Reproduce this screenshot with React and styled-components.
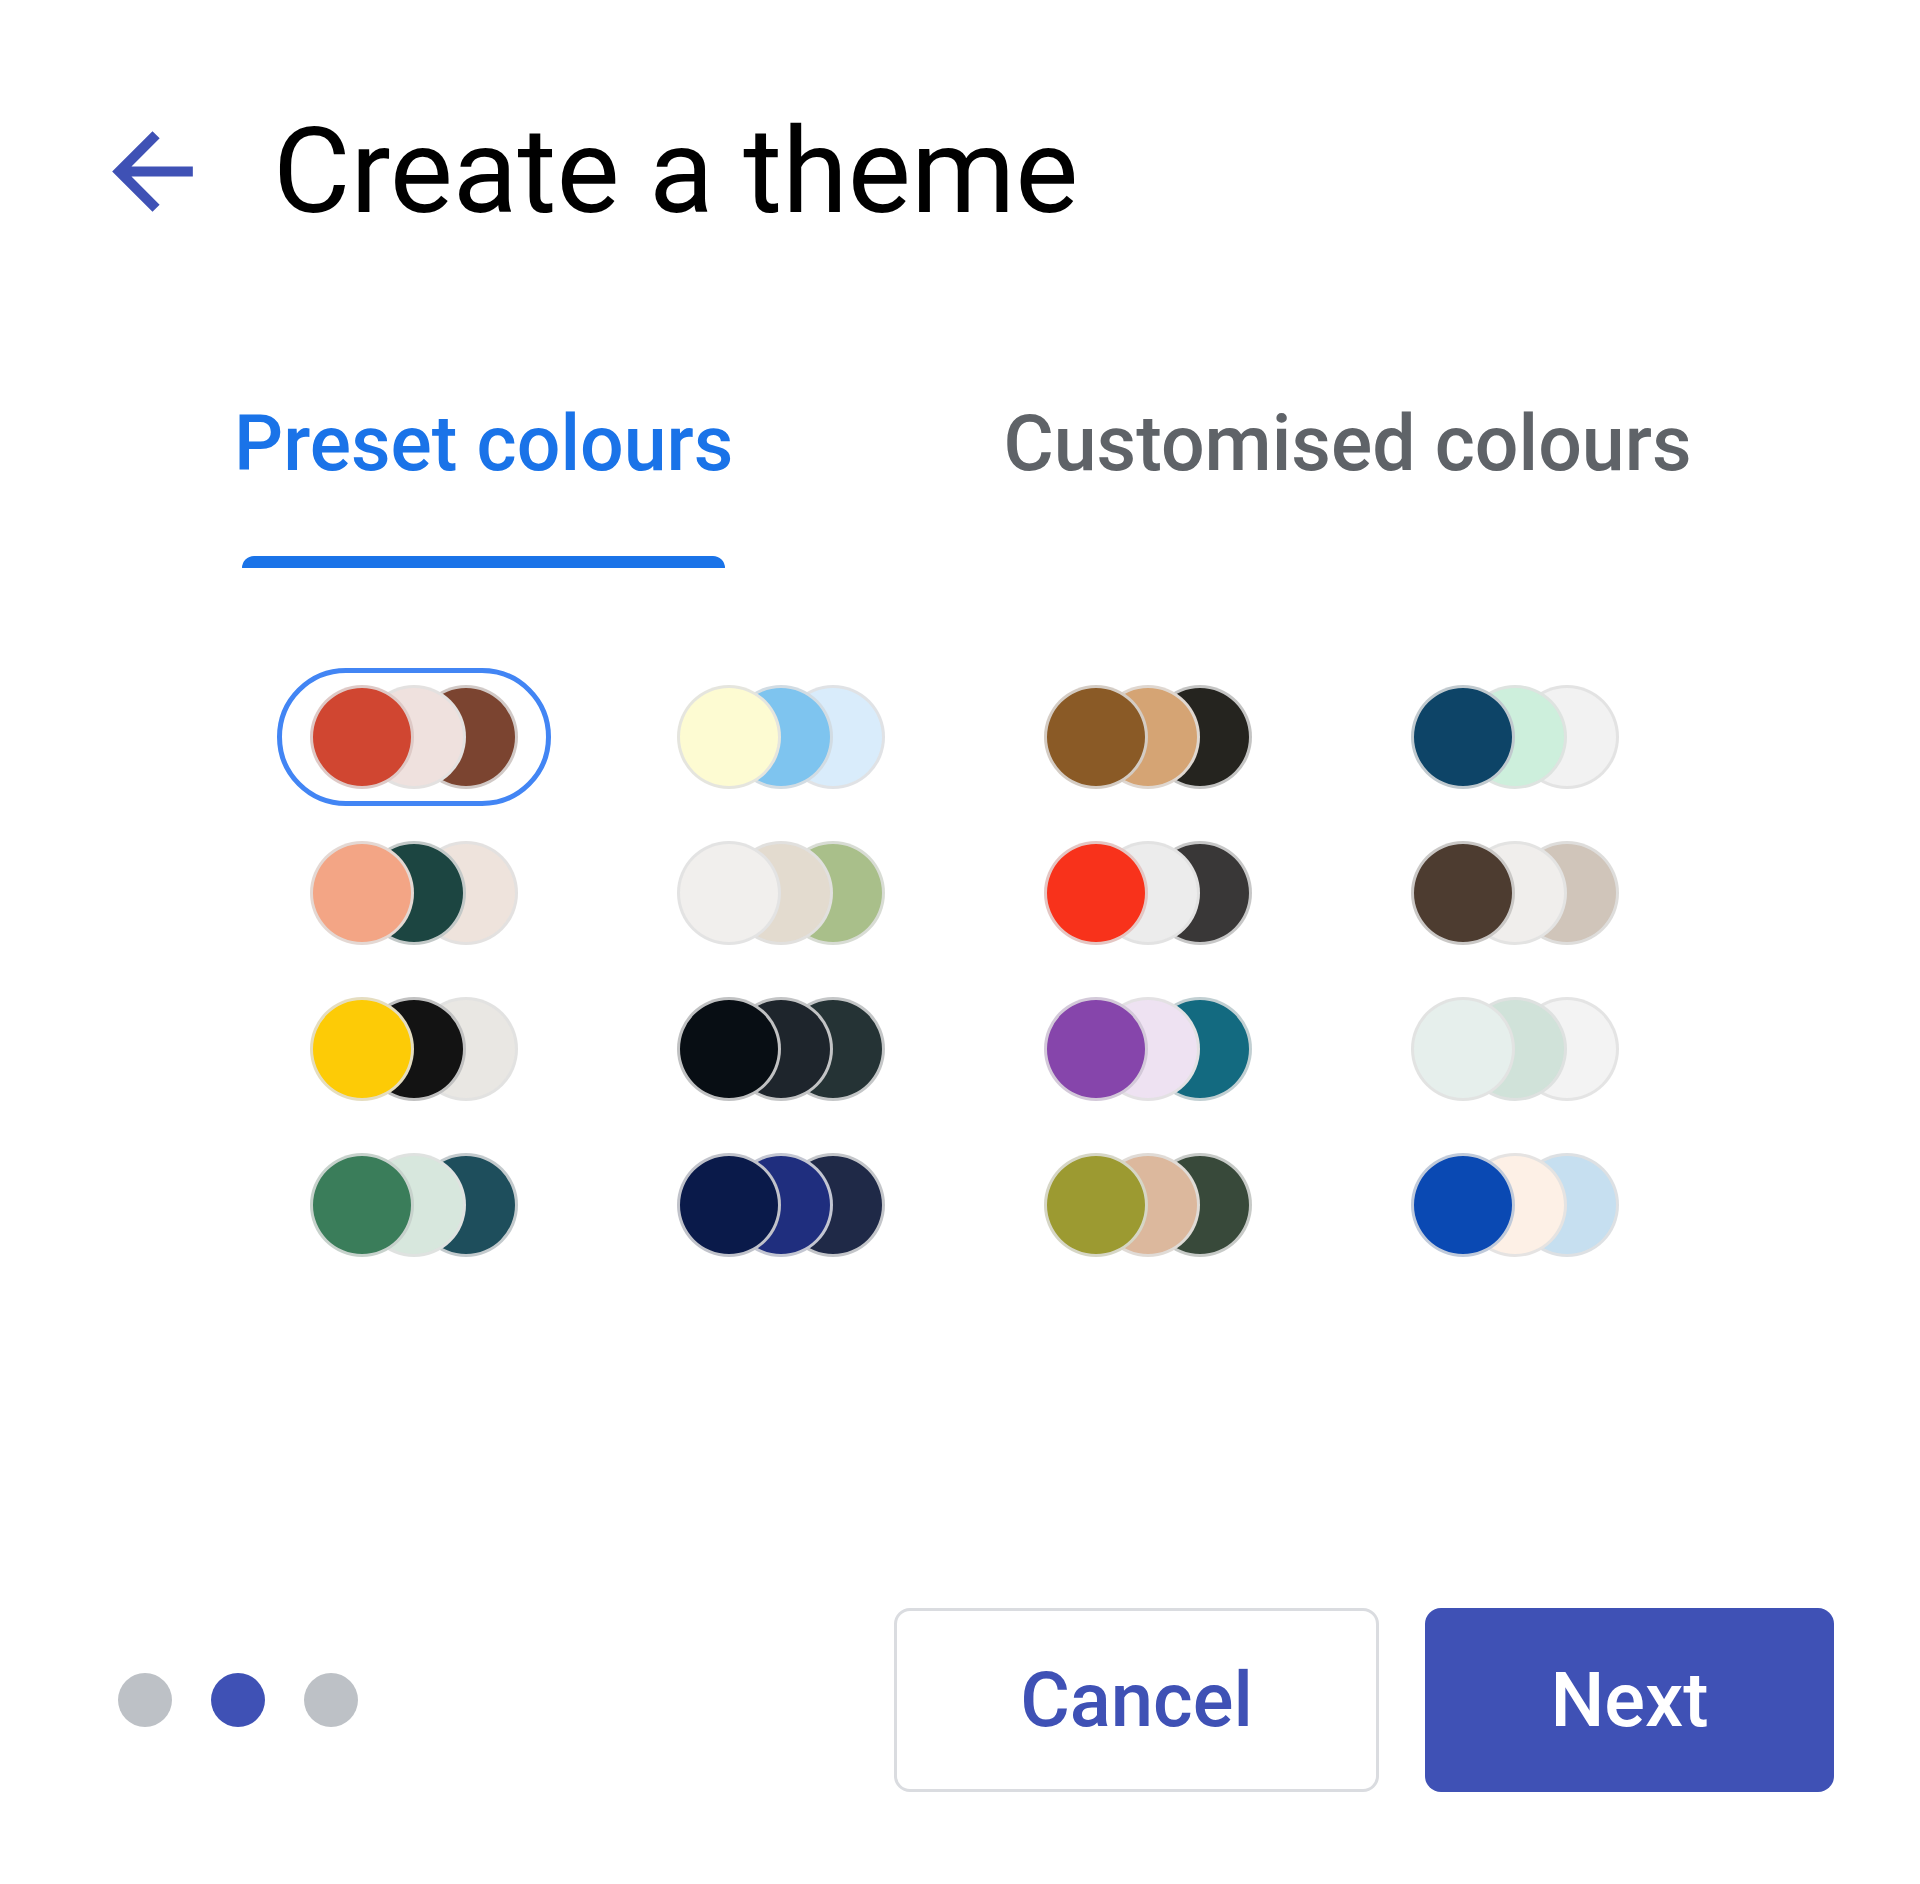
import React, { useState } from "react";
import styled, { createGlobalStyle } from "styled-components";

const GlobalStyle = createGlobalStyle`
	html, body {
		margin: 0;
		padding: 0;
		background: #ffffff;
	}
	body {
		font-family: Roboto, "Liberation Sans", Arial, sans-serif;
		color: #000000;
	}
	* {
		box-sizing: border-box;
	}
`;

const presets = [
	["#d04631", "#efe1de", "#7b4430"],
	["#fdfbd2", "#7ec4ef", "#d9ecfb"],
	["#8a5a26", "#d5a474", "#25241f"],
	["#0d4467", "#cdefdc", "#f2f2f2"],
	["#f3a585", "#1c4541", "#eee3dc"],
	["#f1efed", "#e3dbcf", "#a9bf8a"],
	["#f8321b", "#ececec", "#393737"],
	["#4d3c30", "#f0eeec", "#d0c5ba"],
	["#fdcb06", "#131313", "#e9e7e3"],
	["#080e14", "#1e252c", "#253335"],
	["#8645ab", "#eee2f2", "#136a80"],
	["#e6efec", "#d0e2d9", "#f3f3f3"],
	["#3a7d5a", "#d7e7dd", "#1e4e5c"],
	["#0a1a4a", "#1f2e7e", "#1f2947"],
	["#9c9a31", "#dcb89d", "#38493a"],
	["#0a49b3", "#fdf0e6", "#c6dff0"],
];

const App = () => {
	const [selected, setSelected] = useState(0);
	const [tab, setTab] = useState(0);

	return (
		<>
			<GlobalStyle />
			<Page>
				<Header>
					<BackButton aria-label='Back'>
						<svg viewBox='0 0 24 24' width='121' height='121'>
							<path
								fill='#3f51b5'
								d='M20 11H7.83l5.59-5.59L12 4l-8 8 8 8 1.41-1.41L7.83 13H20v-2z'
							/>
						</svg>
					</BackButton>
					<Title>Create a theme</Title>
				</Header>

				<Tabs>
					<Tab active={tab === 0} onClick={() => setTab(0)}>
						Preset colours
					</Tab>
					<Tab active={tab === 1} onClick={() => setTab(1)}>
						Customised colours
					</Tab>
				</Tabs>

				<SwatchGrid>
					{presets.map((colors, index) => (
						<Swatch
							key={index}
							selected={selected === index}
							onClick={() => setSelected(index)}
						>
							{colors.map((c, i) => (
								<Circle key={i} color={c} layer={3 - i} />
							))}
						</Swatch>
					))}
				</SwatchGrid>

				<Footer>
					<Dots>
						<Dot />
						<Dot active />
						<Dot />
					</Dots>
					<Actions>
						<Button>Cancel</Button>
						<Button primary>Next</Button>
					</Actions>
				</Footer>
			</Page>
		</>
	);
};

const Page = styled.main`
	width: 1920px;
	min-height: 1884px;
	padding-top: 111px;
	display: flex;
	flex-direction: column;
`;

const Header = styled.header`
	display: flex;
	align-items: center;
	padding-left: 92px;
	height: 121px;
`;

const BackButton = styled.button`
	display: flex;
	border: none;
	background: none;
	padding: 0;
	margin-right: 60px;
	cursor: pointer;
`;

const Title = styled.h1`
	margin: 0;
	font-size: 119px;
	line-height: 121px;
	font-weight: 400;
	color: #000000;
`;

const Tabs = styled.nav`
	display: flex;
	gap: 270px;
	margin-top: 173px;
	padding-left: 234px;
`;

const Tab = styled.div`
	position: relative;
	font-size: 77px;
	line-height: 78px;
	font-weight: 500;
	padding-bottom: 85px;
	color: ${(props) => (props.active ? "#1a73e8" : "#5f6368")};
	cursor: pointer;

	&::after {
		content: "";
		display: ${(props) => (props.active ? "block" : "none")};
		position: absolute;
		left: 8px;
		right: 8px;
		bottom: 0;
		height: 12px;
		border-radius: 12px 12px 0 0;
		background: #1a73e8;
	}
`;

const SwatchGrid = styled.section`
	display: grid;
	grid-template-columns: repeat(4, 274px);
	column-gap: 93px;
	row-gap: 18px;
	margin-top: 100px;
	padding-left: 277px;
`;

const Swatch = styled.div`
	display: flex;
	align-items: center;
	width: 274px;
	height: 138px;
	padding: 12px 28px;
	border: 5px solid ${(props) => (props.selected ? "#4285f4" : "transparent")};
	border-radius: 70px;
	cursor: pointer;
`;

const Circle = styled.span`
	position: relative;
	z-index: ${(props) => props.layer};
	flex: 0 0 104px;
	width: 104px;
	height: 104px;
	border-radius: 50%;
	background: ${(props) => props.color};
	border: 3px solid rgba(225, 225, 225, 0.85);

	& + & {
		margin-left: -52px;
	}
`;

const Footer = styled.footer`
	display: flex;
	align-items: center;
	justify-content: space-between;
	margin-top: 334px;
	padding: 0 86px 0 118px;
`;

const Dots = styled.div`
	display: flex;
	gap: 39px;
`;

const Dot = styled.span`
	width: 54px;
	height: 54px;
	border-radius: 50%;
	background: ${(props) => (props.active ? "#3f51b5" : "#bdc1c6")};
`;

const Actions = styled.div`
	display: flex;
	gap: 46px;
`;

const Button = styled.button`
	height: 184px;
	width: ${(props) => (props.primary ? "409px" : "485px")};
	border-radius: 16px;
	font-family: Roboto, "Liberation Sans", Arial, sans-serif;
	font-size: 76px;
	font-weight: 500;
	color: ${(props) => (props.primary ? "#ffffff" : "#3f51b5")};
	background: ${(props) => (props.primary ? "#3f51b5" : "#ffffff")};
	border: ${(props) => (props.primary ? "none" : "3px solid #dadce0")};
	cursor: pointer;
`;

export default App;
